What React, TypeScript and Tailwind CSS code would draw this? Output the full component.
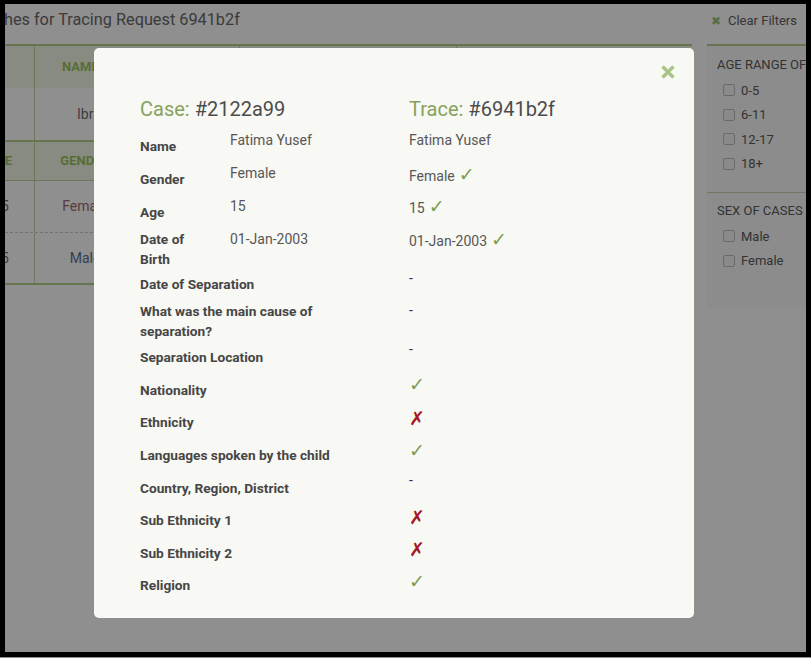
import React from 'react';

const caseRows = [
  { label: 'Name', value: 'Fatima Yusef' },
  { label: 'Gender', value: 'Female' },
  { label: 'Age', value: '15' },
  { label: 'Date of Birth', value: '01-Jan-2003' },
];

const otherLabels = [
  'Date of Separation',
  'What was the main cause of separation?',
  'Separation Location',
  'Nationality',
  'Ethnicity',
  'Languages spoken by the child',
  'Country, Region, District',
  'Sub Ethnicity 1',
  'Sub Ethnicity 2',
  'Religion',
];

type Mark = 'ok' | 'no';

const traceItems: { text?: string; mark?: Mark; h: string }[] = [
  { text: 'Fatima Yusef', h: 'h-[34px]' },
  { text: 'Female', mark: 'ok', h: 'h-[32px]' },
  { text: '15', mark: 'ok', h: 'h-[33px]' },
  { text: '01-Jan-2003', mark: 'ok', h: 'h-[39px]' },
  { text: '-', h: 'h-[32px]' },
  { text: '-', h: 'h-[39px]' },
  { text: '-', h: 'h-[35px]' },
  { mark: 'ok', h: 'h-[34px]' },
  { mark: 'no', h: 'h-[32px]' },
  { mark: 'ok', h: 'h-[30px]' },
  { text: '-', h: 'h-[37px]' },
  { mark: 'no', h: 'h-[32px]' },
  { mark: 'no', h: 'h-[32px]' },
  { mark: 'ok', h: 'h-[20px]' },
];

const MarkGlyph = ({ mark }: { mark: Mark }) =>
  mark === 'ok' ? (
    <span className="font-['DejaVu_Sans',sans-serif] text-[19px] leading-[20px] text-[#7b9e55]">✓</span>
  ) : (
    <span className="font-['DejaVu_Sans',sans-serif] text-[19px] leading-[20px] text-[#a31a1a]">✗</span>
  );

const Checkbox = ({ label }: { label: string }) => (
  <div className="flex h-[24.5px] items-center gap-[6px] pl-[16px]">
    <span className="h-[12px] w-[12px] rounded-[2px] border border-[#bdbdbd] bg-[#f6f6f6]" />
    <span>{label}</span>
  </div>
);

const Page = () => (
  <div className="h-full w-full">
    <div className="flex h-[40px] items-start justify-between pt-[6px] leading-[20px]">
      <div className="-ml-[38px] whitespace-nowrap text-[16.3px] text-[#6a6a6a]">Matches for Tracing Request 6941b2f</div>
      <div className="flex items-center gap-[7px] pr-[9px] pt-[1px] text-[13px] text-[#606060]">
        <span className="text-[12px] text-[#9cc275]">✖</span>
        Clear Filters
      </div>
    </div>

    <div className="flex items-start">
      <div className="w-[687px] text-[14px]">
        {/* first table */}
        <div className="border-t-2 border-[#b6d08a]">
          <div className="flex h-[42px] bg-[#f3f8e8] text-[13px] font-bold uppercase text-[#9bc45c]">
            <div className="w-[30px] border-r border-[#c2d6a0]" />
            <div className="flex w-[205px] items-center border-r border-[#c2d6a0] pl-[27px]">Name</div>
            <div className="flex w-[217px] items-center justify-center border-r border-[#c2d6a0]">Registration Date</div>
            <div className="flex flex-1 items-center justify-center">Location</div>
          </div>
          <div className="flex h-[52px] text-[#6f6f6f]">
            <div className="w-[30px] border-r border-[#c2d6a0]" />
            <div className="flex w-[205px] items-center whitespace-nowrap border-r border-[#c2d6a0] pl-[42px]">Ibrahim Abdullahi</div>
            <div className="flex w-[217px] items-center justify-center border-r border-[#c2d6a0]">12-Mar-2018</div>
            <div className="flex flex-1 items-center justify-center">Kakuma</div>
          </div>
        </div>

        {/* second table */}
        <div className="border-y-2 border-[#b6d08a]">
          <div className="flex h-[39px] border-b border-[#c2d6a0] bg-[#f3f8e8] text-[13px] font-bold uppercase text-[#9bc45c]">
            <div className="flex w-[30px] items-center justify-end whitespace-nowrap border-r border-[#c2d6a0] pr-[22px]">Age</div>
            <div className="flex w-[101px] items-center justify-center border-r border-[#c2d6a0]">Gender</div>
            <div className="flex flex-1 items-center justify-center">Score</div>
          </div>
          <div className="flex h-[52px] border-b border-dashed border-[#c9c9c9]">
            <div className="flex w-[30px] items-center justify-end whitespace-nowrap border-r border-[#c2d6a0] pr-[25px] text-[#6f6f6f]">15</div>
            <div className="flex w-[101px] items-center justify-center border-r border-[#c2d6a0] text-[#9e6c6c]">Female</div>
            <div className="flex flex-1 items-center justify-center text-[#6f6f6f]">0.82</div>
          </div>
          <div className="flex h-[50px]">
            <div className="flex w-[30px] items-center justify-end whitespace-nowrap border-r border-[#c2d6a0] pr-[25px] text-[#6f6f6f]">15</div>
            <div className="flex w-[101px] items-center justify-center border-r border-[#c2d6a0] text-[#5b7196]">Male</div>
            <div className="flex flex-1 items-center justify-center text-[#6f6f6f]">0.64</div>
          </div>
        </div>
      </div>

      <div className="ml-[15px] h-[264px] w-[99px] whitespace-nowrap border-t-2 border-[#b6d08a] bg-[#f9f9f9] text-[13px] text-[#5c5c5c]">
        <div className="pl-[10px] pt-[11px] leading-[16px] uppercase">Age range of cases</div>
        <div className="mt-[5px]">
          <Checkbox label="0-5" />
          <Checkbox label="6-11" />
          <Checkbox label="12-17" />
          <Checkbox label="18+" />
        </div>
        <div className="mt-[16px] border-t border-[#c8d6ad]" />
        <div className="pl-[10px] pt-[10px] leading-[16px] uppercase">Sex of cases</div>
        <div className="mt-[5px]">
          <Checkbox label="Male" />
          <Checkbox label="Female" />
        </div>
      </div>
    </div>
  </div>
);

const Modal = () => (
  <div className="absolute left-[89px] top-[44px] h-[570px] w-[600px] rounded-[5px] bg-[#f8f8f4] px-[46px] pt-[48px]">
    <button className="absolute left-[567px] top-[17px] text-[#a6c587]">
      <svg width="14" height="14" viewBox="0 0 14 14">
        <path d="M1.5 1.5 L12.5 12.5 M12.5 1.5 L1.5 12.5" stroke="currentColor" strokeWidth="3.2" />
      </svg>
    </button>

    <div className="flex">
      <div className="w-[269px]">
        <div className="h-[34px] pt-[1px] text-[20px] leading-[24px] text-[#4c4c4c]">
          <span className="text-[#87a25c]">Case:</span> #2122a99
        </div>
        {caseRows.map((r) => (
          <div key={r.label} className="flex">
            <div className="mr-[20px] flex w-[70px] items-center pb-[1px] text-[13.7px] font-bold leading-[20px] text-[#464646]">{r.label}</div>
            <div className="pb-[13px] text-[14px] leading-[20px] text-[#575757]">{r.value}</div>
          </div>
        ))}
        <div className="-mt-[2px]">
          {otherLabels.map((l) => (
            <div key={l} className="flex min-h-[32.65px] w-[239px] items-center text-[13.7px] font-bold leading-[20px] text-[#464646]">
              {l}
            </div>
          ))}
        </div>
      </div>

      <div className="flex-1">
        <div className="h-[34px] pt-[1px] text-[20px] leading-[24px] text-[#4c4c4c]">
          <span className="text-[#87a25c]">Trace:</span> #6941b2f
        </div>
        {traceItems.map((t, i) => (
          <div key={i} className={`${t.h} flex items-baseline gap-[4px] text-[14px] leading-[20px] text-[#575757]`}>
            {t.text && <span className={t.text === '-' ? 'text-[#333]' : ''}>{t.text}</span>}
            {t.mark && <MarkGlyph mark={t.mark} />}
          </div>
        ))}
      </div>
    </div>
  </div>
);

export default function App() {
  return (
    <div className="flex h-[658px] w-[811px] flex-col bg-black font-['Roboto',sans-serif]">
      <div className="px-[5px] pt-[4px]">
        <div className="relative h-[648px] w-[801px] overflow-hidden bg-white">
          <Page />
          <div className="absolute inset-0 bg-black/[0.44]" />
          <Modal />
        </div>
      </div>
      <div className="mt-auto h-px w-full bg-[#8f8f8f]" />
    </div>
  );
}
